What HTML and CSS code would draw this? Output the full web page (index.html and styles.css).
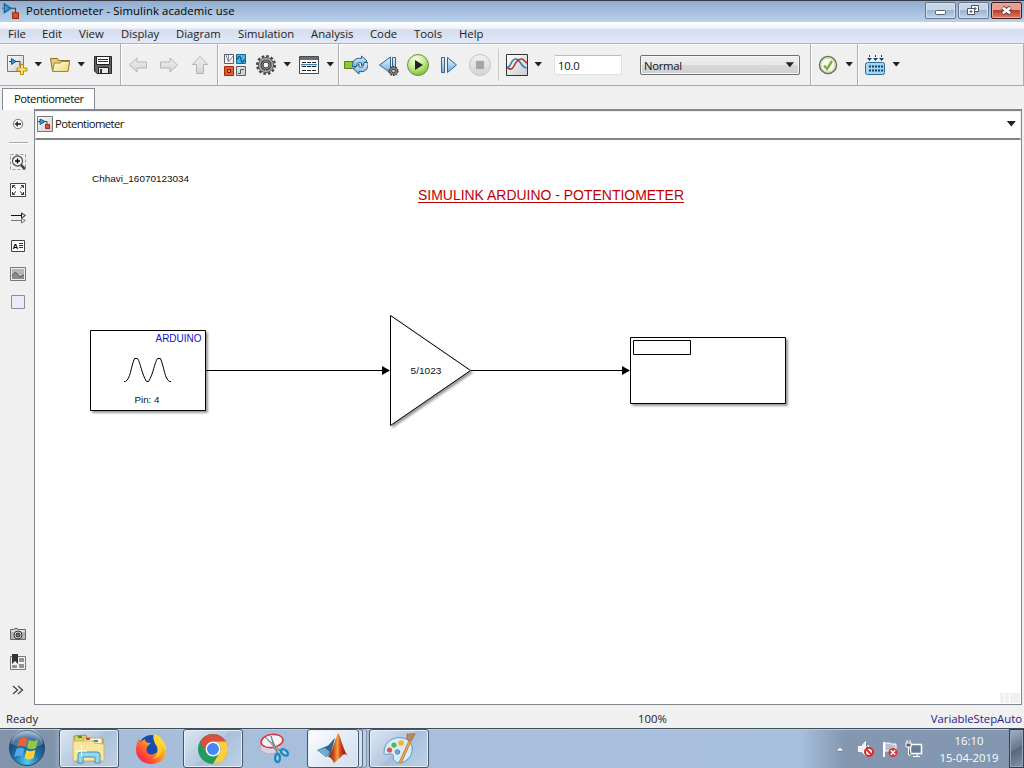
FILE: index.html
```html
<!DOCTYPE html>
<html lang="en">
<head>
<meta charset="utf-8">
<title>Potentiometer - Simulink academic use</title>
<link rel="stylesheet" href="styles.css">
</head>
<body>
<svg width="0" height="0" class="defs">
  <defs>
    <linearGradient id="blue" x1="0" y1="0" x2="0" y2="1"><stop offset="0" stop-color="#e2f3fc"/><stop offset="1" stop-color="#72aedb"/></linearGradient>
    <linearGradient id="tile" x1="0" y1="0" x2="1" y2="1"><stop offset="0" stop-color="#fff"/><stop offset="1" stop-color="#c9ccd0"/></linearGradient>
    <linearGradient id="yellow" x1="0" y1="0" x2="1" y2="1"><stop offset="0" stop-color="#fffff0"/><stop offset="1" stop-color="#ecd36c"/></linearGradient>
    <radialGradient id="green" cx=".4" cy=".25" r=".8"><stop offset="0" stop-color="#fafff0"/><stop offset=".5" stop-color="#c5ec8c"/><stop offset="1" stop-color="#74b72c"/></radialGradient>
    <linearGradient id="gray" x1="0" y1="0" x2="0" y2="1"><stop offset="0" stop-color="#f2f2f2"/><stop offset="1" stop-color="#d2d2d2"/></linearGradient>
    <linearGradient id="flame" x1="0" y1="0" x2="1" y2="0"><stop offset="0" stop-color="#5d1b12"/><stop offset=".3" stop-color="#b8401a"/><stop offset=".5" stop-color="#f6a03c"/><stop offset=".62" stop-color="#d9461c"/><stop offset=".78" stop-color="#9f2414"/><stop offset="1" stop-color="#e04a20"/></linearGradient>
    <linearGradient id="fox" x1="1" y1="0" x2="0" y2="1"><stop offset="0" stop-color="#fff04c"/><stop offset=".4" stop-color="#ffa41c"/><stop offset=".75" stop-color="#ff3d3d"/><stop offset="1" stop-color="#e5187a"/></linearGradient>
    <radialGradient id="orb" cx=".5" cy=".9" r=".9"><stop offset="0" stop-color="#45d5f4"/><stop offset=".4" stop-color="#1d71a8"/><stop offset=".75" stop-color="#1c4c7c"/><stop offset="1" stop-color="#9fc4dc"/></radialGradient>
    <symbol id="caret" viewBox="0 0 8 5"><path d="M.5 0h7.500L4.300 4.500z" fill="#222"/></symbol>
    <symbol id="model" viewBox="0 0 16 16"><path d="M1 5.500H0M7 5.500h5v4" fill="none" stroke="#35424e"/><path d="M2 1.500v8l6-4z" fill="#2a9fd8" stroke="#145a85"/><path d="M9.500 9.500h5v5h-5z" fill="#e65224" stroke="#962c10"/></symbol>
    <symbol id="modelTile" viewBox="0 0 16 16"><path d="M.5.5h15v15H.5z" fill="url(#tile)" stroke="#777"/><path d="M1 5.500h9v4" fill="none" stroke="#35424e"/><path d="M3 3v5.500l5-3z" fill="#2a9fd8" stroke="#145a85"/><path d="M8.500 8.500h4v4h-4z" fill="#e65224" stroke="#962c10"/></symbol>
    <filter id="shadow" x="-10%" y="-10%" width="125%" height="125%"><feDropShadow dx="2" dy="2" stdDeviation="1.300" flood-color="#000" flood-opacity=".4"/></filter>
  </defs>
</svg>
<div class="window">
  <header class="titlebar">
    <svg class="app-icon" width="18" height="18"><use href="#model"/></svg>
    <span class="title">Potentiometer - Simulink academic use</span>
    <div class="controls">
      <span class="control"><svg width="29" height="15"><rect x="9.500" y="7.500" width="10" height="4" rx="1" fill="#fff" stroke="#555f74"/></svg></span>
      <span class="control"><svg width="29" height="15"><path d="M12.500 2.500h7v6h-7z" fill="#fff" stroke="#4d5668"/><path d="M15 5h2v1h-2z" fill="#8ba" stroke="#4d5668"/><path d="M8.500 5.500h7v6h-7z" fill="#fff" stroke="#4d5668"/><path d="M11 8h2v1h-2z" fill="#8ba" stroke="#4d5668"/></svg></span>
      <span class="control close"><svg width="29" height="15"><path d="m10.500 4.500 8 6m0-6-8 6" stroke="#594149" stroke-width="4.600"/><path d="m10.800 4.700 7.400 5.600m0-5.600-7.400 5.600" stroke="#fff" stroke-width="2.600"/></svg></span>
    </div>
  </header>
  <nav class="menubar">
    <span class="m-file">File</span><span class="m-edit">Edit</span><span class="m-view">View</span><span class="m-display">Display</span><span class="m-diagram">Diagram</span><span class="m-sim">Simulation</span><span class="m-analysis">Analysis</span><span class="m-code">Code</span><span class="m-tools">Tools</span><span class="m-help">Help</span>
  </nav>
  <div class="toolbar">
    <div class="group file-group">
      <svg class="icon" viewBox="0 0 24 24"><path d="M2.500 2.500h16v16h-16z" fill="url(#tile)" stroke="#777"/><path d="M4 8.500h11v5" fill="none" stroke="#35424e"/><path d="M6.500 5.500v6l4.500-3z" fill="#2a9fd8" stroke="#145a85"/><path d="M15.500 11.500h3v3.500H22v3h-3.500V21.500h-3v-3.500H12v-3h3.500z" fill="#ffe46b" stroke="#b08a20"/></svg>
      <svg class="caret"><use href="#caret"/></svg>
      <svg class="icon" viewBox="0 0 24 24"><path d="M4.500 18 2.500 5.500h7l1 2h11L20 18z" fill="#e3cb78" stroke="#8b7225"/><path d="M4.500 18.500 6.500 10h6l1-1.500h8L20 18.500z" fill="url(#yellow)" stroke="#a08534"/></svg>
      <svg class="caret"><use href="#caret"/></svg>
      <svg class="icon" viewBox="0 0 24 24"><path d="M3.500 3.500h17v17H6l-2.500-2.500z" fill="#60656a" stroke="#26292c"/><path d="M5.500 3.500h13v8h-13z" fill="#fff" stroke="#222"/><path d="M7 6.500h10M7 8.500h10" stroke="#333"/><path d="M7.500 14.500h10v6h-10z" fill="#e7e9eb" stroke="#222"/><path d="M9 16h2v4H9z" fill="#333"/></svg>
    </div>
    <div class="group nav-group">
      <svg class="icon" viewBox="0 0 24 24"><path d="m3.500 12 7.500-7v4h9.500v6H11v4z" fill="url(#gray)" stroke="#b4b4b4"/></svg>
      <svg class="icon" viewBox="0 0 24 24"><path d="M20.500 12 13 5v4H3.500v6H13v4z" fill="url(#gray)" stroke="#b4b4b4"/></svg>
      <svg class="icon" viewBox="0 0 24 24"><path d="m12 3.500 7.500 8h-4v9h-7v-9h-4z" fill="url(#gray)" stroke="#b4b4b4"/></svg>
    </div>
    <div class="group model-group">
      <svg class="icon" viewBox="0 0 24 24"><path d="M1.500 1.500h9v9h-9zM13.500 13.500h9v9h-9z" fill="url(#tile)" stroke="#5a5f65"/><path d="M3 2l2 6M5.500 2v7l4.500-6" fill="none" stroke="#8a8f95"/><path d="M13.500 1.500h9v9h-9z" fill="#46b5e8" stroke="#17668f"/><path d="M14.500 6.500c1-4 3-4 3.500 0s2.500 3 3.500 0" fill="none" stroke="#064d7a" stroke-width="1.200"/><path d="M1.500 13.500h9v9h-9z" fill="#e65a2c" stroke="#9f2b0e"/><path d="M4.500 16.500h3v3h-3z" fill="#f28b64" stroke="#711b05"/><path d="M15 20.500h2.500v-4H21" fill="none" stroke="#555"/></svg>
      <svg class="icon gear" viewBox="0 0 24 24"><circle cx="12" cy="12" r="8.800" fill="none" stroke="#444" stroke-width="2.400" stroke-dasharray="2.600 2"/><circle cx="12" cy="12" r="7.600" fill="#a8a8a8" stroke="#5a5a5a"/><circle cx="12" cy="12" r="5" fill="#8c8c8c" stroke="#444" stroke-width="1.200"/><circle cx="12" cy="12" r="3" fill="#f4f4f4" stroke="#333"/></svg>
      <svg class="caret"><use href="#caret"/></svg>
      <svg class="icon" viewBox="0 0 24 24"><path d="M2.500 3.500h19v17h-19z" fill="#fff" stroke="#454b52"/><path d="M3 4h18v3H3z" fill="#667078"/><path d="M4 11h16v3H4z" fill="#bde0f5"/><path d="M5 9.500h4m1 0h4m1 0h4M5 13.500h4m1 0h4m1 0h4M5 17.500h4m1 0h4m1 0h4" stroke="#222"/><path d="M4 11.500h16" stroke="#3a85b8"/></svg>
      <svg class="caret"><use href="#caret"/></svg>
    </div>
    <div class="group sim-group">
      <svg class="icon" viewBox="0 0 24 24"><path d="M.5 8.500h11v7H.5z" fill="#90c83c" stroke="#587e20"/><path d="M8.500 13.500C8 7 12 4.500 17.500 5.500V3l5.500 5-5.500 5v-3c-4-1-5 1-5 3.500z" fill="url(#blue)" stroke="#235b8b"/><path d="M24 9.500c.5 7-3.500 10-9 9V21l-5.500-5 5.500-5v3c4 1 5-1 5-4.500z" fill="url(#blue)" stroke="#235b8b"/></svg>
      <svg class="icon step-back" viewBox="0 0 24 24"><path d="M13.500 4v16L2.500 12z" fill="url(#blue)" stroke="#35658f"/><path d="M15.500 4.500h3v15h-3z" fill="url(#blue)" stroke="#35658f"/><circle cx="16.500" cy="18" r="4.300" fill="#888" stroke="#333" stroke-width="1.400" stroke-dasharray="1.700 1"/><circle cx="16.500" cy="18" r="1.800" fill="#ddd" stroke="#333"/></svg>
      <svg class="icon run" viewBox="0 0 24 24"><circle cx="12" cy="12" r="10.500" fill="url(#green)" stroke="#6c8c4a"/><path d="M9 7v10l8-5z" fill="#222"/></svg>
      <svg class="icon step" viewBox="0 0 24 24"><path d="M4.500 4.500h3v15h-3zM10.500 4.500v15l9-7.500z" fill="url(#blue)" stroke="#35658f"/></svg>
      <svg class="icon stop" viewBox="0 0 24 24"><circle cx="12" cy="12" r="10.500" fill="url(#gray)" stroke="#c5c5c5"/><path d="M8 8h8v8H8z" fill="#a5a5a5"/></svg>
      <span class="thin-rule"></span>
      <svg class="icon" viewBox="0 0 24 24"><path d="M1.500 1.500h21v21h-21z" fill="url(#tile)" stroke="#333"/><path d="M2 15c4-1 4-9 8.500-9C16 6 15 14 21.500 15" fill="none" stroke="#347fb9" stroke-width="1.600"/><path d="M2 14c2 3 5 3 7-1 2-5 4-7 7.500-7C19 6 20 9 22 10" fill="none" stroke="#b9302c" stroke-width="1.600"/></svg>
      <svg class="caret"><use href="#caret"/></svg>
      <span class="stop-time">10.0</span>
      <span class="mode"><span>Normal</span><svg class="select-arrow"><use href="#caret"/></svg></span>
    </div>
    <div class="group check-group">
      <svg class="icon" viewBox="0 0 24 24"><circle cx="12" cy="12" r="8.500" fill="#f8fbf2" stroke="#667260" stroke-width="1.500"/><circle cx="12" cy="12" r="7" fill="none" stroke="#b9d794"/><path d="m8 12.500 3 3.500 5-8" fill="none" stroke="#7eaf35" stroke-width="2.400"/></svg>
      <svg class="caret"><use href="#caret"/></svg>
    </div>
    <div class="group deploy-group">
      <svg class="icon" viewBox="0 0 24 24"><path d="M6.500 2v4m6-4v4m6-4v4" stroke="#17446e" stroke-dasharray="2 1"/><path d="M4 5h5L6.500 8zM10 5h5l-2.500 3zM16 5h5l-2.500 3z" fill="#17446e"/><rect x="2.500" y="9.500" width="19" height="12" rx="2" fill="#a5d5f5" stroke="#2d6b9c"/><path d="M6 13.500h14M6 17.500h14" stroke="#123f69" stroke-width="2" stroke-dasharray="2 1"/></svg>
      <svg class="caret"><use href="#caret"/></svg>
    </div>
  </div>
  <div class="tabs"><span class="tab">Potentiometer</span></div>
  <main class="workspace">
    <aside class="palette">
      <svg class="tool" viewBox="0 0 28 28"><circle cx="14" cy="14" r="4.700" fill="#f7f7f7" stroke="#777"/><path d="M17 14h-4" stroke="#333" stroke-width="1.800"/><path d="M14 11v6l-3.500-3z" fill="#333"/></svg>
      <span class="palette-rule"></span>
      <svg class="tool" viewBox="0 0 28 28"><path d="M6.500 6.500h15v15h-15z" fill="none" stroke="#999" stroke-dasharray="3 2"/><circle cx="13.500" cy="13" r="5" fill="#f8f8f8" stroke="#555" stroke-width="1.300"/><path d="M11 13h5m-2.500-2.500v5" stroke="#000" stroke-width="1.500"/><path d="m17 17 4 4" stroke="#444" stroke-width="2.500"/></svg>
      <svg class="tool" viewBox="0 0 28 28"><path d="M6.500 7.500h15v13h-15z" fill="#fff" stroke="#444"/><path d="M8.500 12V9.500H11M9 10l3 2.500M19.500 12V9.500H17M19 10l-3 2.500M8.500 16v2.500H11M9 18l3-2.500M19.500 16v2.500H17M19 18l-3-2.500" fill="none" stroke="#333"/></svg>
      <svg class="tool" viewBox="0 0 28 28"><path d="M7 11.500h11" stroke="#111"/><path d="M17.500 9v5l4-2.500z" fill="#eee" stroke="#222"/><path d="M7 16.500h11" stroke="#777"/><path d="M17.500 14v5l4-2.500z" fill="#eee" stroke="#777"/></svg>
      <svg class="tool" viewBox="0 0 28 28"><path d="M7.500 8.500h13v11h-13z" fill="#fff" stroke="#444"/><text x="8.500" y="17" class="annotation-letter">A</text><path d="M15 11.500h4M15 13.500h4M15 15.500h4" stroke="#333"/></svg>
      <svg class="tool" viewBox="0 0 28 28"><path d="M6.500 7.500h15v13h-15z" fill="#eee" stroke="#777"/><path d="M8 9h12v10H8z" fill="#b5b5b5"/><path d="M8 16c3-5 4-4 6-1s3 1 6 0v4H8z" fill="#8a8a8a"/><path d="M8 16c3-5 4-4 6-1s3 1 6 0" fill="none" stroke="#555"/></svg>
      <svg class="tool" viewBox="0 0 28 28"><path d="M7.500 7.500h13v13h-13z" fill="#eaeaf8" stroke="#8e8e98"/></svg>
      <div class="palette-bottom">
        <svg class="tool" viewBox="0 0 28 28"><path d="M6.500 9.500h3l1-1h3l1 1h7v10h-15z" fill="#b5b5b5" stroke="#666"/><path d="M7 10h14v2H7z" fill="#ddd"/><circle cx="14" cy="15" r="4" fill="#ddd" stroke="#333"/><circle cx="14" cy="15" r="2" fill="#777" stroke="#222"/></svg>
        <svg class="tool" viewBox="0 0 28 28"><path d="M6.500 8.500h15v13h-15z" fill="#f5f5f5" stroke="#777"/><path d="M8 6h6v10l-3-3-3 3z" fill="#333"/><path d="M15 10h5v4h-5zM15 16h5v4h-5zM8 17h5v3H8z" fill="#929292"/></svg>
        <svg class="tool" viewBox="0 0 28 28"><path d="m9 10 4.500 4L9 18m5-8 4.500 4L14 18" fill="none" stroke="#444" stroke-width="1.300"/></svg>
      </div>
    </aside>
    <section class="editor">
      <div class="breadcrumb"><svg width="16" height="16"><use href="#modelTile"/></svg><span>Potentiometer</span><svg class="crumb-arrow"><use href="#caret"/></svg></div>
      <svg class="canvas" viewBox="35 140 986 564" width="986" height="564">
        <text class="note" x="92" y="182" textLength="97" lengthAdjust="spacingAndGlyphs">Chhavi_16070123034</text>
        <text class="heading" x="418" y="200" textLength="266" lengthAdjust="spacingAndGlyphs">SIMULINK ARDUINO - POTENTIOMETER</text>
        <path d="M418 202.500h266" stroke="#c00000"/>
        <path d="M90.500 330.500h115v80h-115z" class="block"/>
        <text class="arduino" x="155.500" y="342" textLength="46" lengthAdjust="spacingAndGlyphs">ARDUINO</text>
        <path d="M124 381.500h1.500c5-3 5-13 9-23h3c3 4 4 15 9 23h2c5-8 6-19 9-23h3c4 10 4 20 9 23h1.500" class="wave"/>
        <text class="note" x="134.500" y="403" textLength="25" lengthAdjust="spacingAndGlyphs">Pin: 4</text>
        <path d="M390.500 315.500v110l80-55z" class="block"/>
        <text class="note" x="410.500" y="374" textLength="31" lengthAdjust="spacingAndGlyphs">5/1023</text>
        <path d="M630.500 337.500h155v66h-155z" class="block"/>
        <path d="M633.500 340.500h57v14h-57z" class="readout"/>
        <path d="M206 370.500h177m88 0h152" stroke="#000"/>
        <path d="m382 366 8 4.500-8 4.500zM622 366l8 4.500-8 4.500z"/>
        <path d="M1000 693h4v10h-4zM1005 693h4v10h-4zM1010 693h10v10h-10z" fill="#f0f0f0"/>
      </svg>
    </section>
  </main>
  <footer class="status"><span class="ready">Ready</span><span class="zoom">100%</span><span class="solver">VariableStepAuto</span></footer>
  <div class="taskbar">
    <div class="start"><svg width="40" height="40" viewBox="0 0 40 40"><circle cx="20" cy="19" r="17.500" fill="url(#orb)" stroke="#274865"/><path d="M4 15a16 16 0 0 1 32 0c-10 5-20 3-32 0z" fill="#fff" opacity=".23"/><path d="M12.500 10c3-2 5-1.500 8 0L18 18c-3-2-5-1-8 0z" fill="#ef6130"/><path d="M22 11c3 2 6 1 9-.5L29 19c-3 1.500-6 2-9 0z" fill="#91c840"/><path d="M9.500 20c3-2 5-1 8 0L15 28c-3-2-5-1-8 0z" fill="#55a9e8"/><path d="M19.500 21c3 2 6 1 9 0l-2 8c-3 2-6 2-9 0z" fill="#ffd13d"/></svg></div>
    <div class="slot"><span class="task active"><svg width="36" height="34" viewBox="0 0 36 34"><path d="M3 4l12-1 1 3 16 1v22H3z" fill="#e4ca6b" stroke="#a38c3f"/><path d="M13 6h18v6H13z" fill="#fff8d0" stroke="#c3aa57"/><path d="M7 4h4v2H7z" fill="#24a728"/><path d="M15 6h4v2h-4z" fill="#d5422b"/><path d="M22 8h5v2h-5z" fill="#2e8edb"/><path d="M2 9h21v2l10 1v17H2z" fill="#f7e6a0" stroke="#d0b85f"/><path d="M7 31v-8q0-3 3-3h16q3 0 3 3v8h-5v-6H12v6z" fill="#91d8f1" stroke="#488fac"/><path d="M5 19h11M10.500 13v11" stroke="#fff"/></svg></span></div>
    <div class="slot"><span class="task"><svg width="34" height="34" viewBox="0 0 34 34"><circle cx="17.500" cy="16" r="13" fill="#174bb0"/><path d="M20 2c5 1 12 8 12 16 0 9-7 14-15 14S2 26 2 18c0-5 1-9 4-12v4l5-3c0 3 2 4 6 4l-4 4c-2 5 2 9 7 7 6-2 5-8 1-10 0-4-3-6-1-10z" fill="url(#fox)"/><path d="M21 2c5 2 11 8 11 16l-4-4c1 8-4 13-10 13 5-2 7-7 4-14-3-5-3-7-1-11z" fill="#ffe33c" opacity=".65"/></svg></span></div>
    <div class="slot"><span class="task active"><svg width="34" height="34" viewBox="0 0 34 34"><circle cx="17" cy="17" r="15" fill="#229b5d"/><path d="M4 9.500A15 15 0 0 1 30 9.500H17a7.500 7.500 0 0 0-6.500 11.250z" fill="#d85040"/><path d="M30 9.500A15 15 0 0 1 17 32l6.500-11.250A7.500 7.500 0 0 0 17 9.500z" fill="#ffcd40"/><circle cx="17" cy="17" r="7.500" fill="#fff"/><circle cx="17" cy="17" r="6" fill="#4688f4"/></svg></span></div>
    <div class="slot"><span class="task"><svg width="34" height="34" viewBox="0 0 34 34"><ellipse cx="12" cy="15" rx="10" ry="7" fill="#d3d5e4" stroke="#d3a3b4"/><ellipse cx="14" cy="9" rx="11" ry="6.500" fill="#f6f6fa" stroke="#d83b3f" stroke-width="1.600" transform="rotate(-8 14 9)"/><path d="m7 5 16 14-5-2zM13 4l7 18-4-6z" fill="#e5e9ec" stroke="#78828c"/><ellipse cx="26.500" cy="20.500" rx="4" ry="2.500" fill="#b7d5ea" stroke="#2187c4" stroke-width="2.400" transform="rotate(40 26.500 20.500)"/><ellipse cx="19.500" cy="26" rx="2.300" ry="4" fill="#b7d5ea" stroke="#2187c4" stroke-width="2.400"/></svg></span></div>
    <div class="slot"><span class="task active bright"><svg width="36" height="34" viewBox="0 0 36 34"><path d="m2 18 10-4c3-1 5-6 8-8l-4 15-5 4z" fill="#2f6793"/><path d="m2 18 8-2 5 4-4 5z" fill="#6caed0"/><path d="M11 25c5 0 6-9 12-24 2 1 5 18 11 24-4-4-6-3-8 0-2 1-3 3-7 6-2-4-4-7-8-6z" fill="url(#flame)"/></svg></span><span class="stack"></span><span class="stack second"></span></div>
    <div class="slot"><span class="task active"><svg width="36" height="34" viewBox="0 0 36 34"><path d="M3 20C3 9 14 4 22 6c10 2 12 14 5 21-5 5-12 5-14 1-2-3 1-4-2-6-3-1-8 3-8-2z" fill="#d5edf9" stroke="#519dc4"/><circle cx="8.500" cy="18" r="2.600" fill="#e25448"/><circle cx="13" cy="13" r="2.600" fill="#5ab64c"/><circle cx="20" cy="11" r="2.800" fill="#f3b431"/><circle cx="16.500" cy="20" r="2.200" fill="#73a9d5" stroke="#458bb7"/><path d="M29 9 19 31" stroke="#c9741e" stroke-width="3"/><path d="M29 9 19 31" stroke="#f4a849" stroke-width="1.500"/><path d="M26 2c3 1 5-1 8 0l-4 7-4-2z" fill="#b98c5c" stroke="#9c7249"/></svg></span></div>
    <div class="tray">
      <svg class="up" width="10" height="6"><path d="M1 5h8L5 1z" fill="#fff" stroke="#52637b" stroke-width=".5"/></svg>
      <svg class="tray-icon" width="18" height="18" viewBox="0 0 18 18"><path d="M1.500 6.500h3l4-5v14l-4-4h-3z" fill="#eee" stroke="#fff"/><path d="M11 5q2 3 0 5" fill="none" stroke="#fff"/><circle cx="12" cy="12" r="4" fill="#fff" stroke="#d52d26" stroke-width="2"/><path d="m9 9 6 6" stroke="#d52d26" stroke-width="2"/></svg>
      <svg class="tray-icon" width="18" height="18" viewBox="0 0 18 18"><path d="M3 17V2" stroke="#fff" stroke-width="2"/><path d="M4 3h5l1 1h5v8H9l-1-1H4z" fill="#b7c0cc" stroke="#fff"/><circle cx="12" cy="12.500" r="4.500" fill="#d63732"/><path d="m9.800 10.300 4.400 4.400m0-4.400-4.400 4.400" stroke="#fff" stroke-width="1.500"/></svg>
      <svg class="tray-icon" width="18" height="18" viewBox="0 0 18 18"><path d="M5.500 4.500h11v9h-11z" fill="#687b93" stroke="#fff" stroke-width="1.500"/><path d="M8 16.500h7M12 14v2" stroke="#fff"/><path d="M1 3h5v4H1zM2 0v3m3-3v3M3.500 7v8H6" fill="#516178" stroke="#fff"/></svg>
      <div class="clock"><span>16:10</span><span>15-04-2019</span></div>
      <span class="show-desktop"></span>
    </div>
  </div>
</div>
</body>
</html>
```
FILE: styles.css
```css
* { box-sizing: border-box; }
body { margin: 0; overflow: hidden; background: #f0f0f0; color: #111; font: 11.3px/16px "Open Sans", "Noto Sans", sans-serif; }
svg { display: block; flex: none; }
.defs { position: absolute; }
.window { width: 1024px; height: 768px; display: flex; flex-direction: column; }
.titlebar { height: 22px; flex: none; display: flex; padding-left: 2px; border-top: 1px solid #343941; background: linear-gradient(#91acce, #b9d1ea); color: #000; }
.app-icon { margin-top: 1px; }
.title { margin: 2px 0 0 6px; letter-spacing: .09px; white-space: nowrap; }
.controls { margin-left: auto; display: flex; gap: 2px; padding: 1px 2px 0 0; }
.control { width: 31px; height: 17px; border: 1px solid #65758e; border-radius: 2px; background: linear-gradient(#c6d6e8 48%, #9db5d0 50%, #bbd1e8); box-shadow: inset 0 0 0 1px #d5e2f0; }
.close { border-color: #451723; background: linear-gradient(#e2a191 45%, #bf3d26 50%, #d98064); box-shadow: inset 0 0 0 1px #e6aca0; }
.menubar { height: 21px; flex: none; display: flex; padding: 4px 0 0 8px; color: #222; background: linear-gradient(#fff 0, #f0f4fb 6px, #d5dcec 8px, #e1e8f8 100%); white-space: nowrap; }
.m-file { width: 34px; }
.m-edit { width: 37px; }
.m-view { width: 42px; }
.m-display { width: 55px; }
.m-diagram { width: 62px; }
.m-sim { width: 73px; }
.m-analysis { width: 59px; }
.m-code { width: 44px; }
.m-tools { width: 45px; }
.toolbar { height: 43px; flex: none; display: flex; border-top: 1px solid #adb3bf; border-bottom: 1px solid #a9a9a9; background: #f0f0f0; box-shadow: inset 0 1px #fff; }
.group { display: flex; align-items: center; padding-left: 5px; border-right: 1px solid #aeaeae; box-shadow: 1px 0 #fff; }
.file-group { width: 121px; }
.nav-group { width: 97px; gap: 7px; }
.model-group { width: 121px; }
.sim-group { width: 472px; }
.check-group { width: 47px; }
.deploy-group { flex: 1; }
.icon { width: 24px; height: 24px; }
.caret { width: 8px; height: 5px; margin: 0 6px 0 5px; }
.gear { margin-left: 7px; }
.step-back { margin-left: 9px; }
.run { margin-left: 5px; }
.step, .stop { margin-left: 7px; }
.thin-rule { width: 1px; height: 32px; margin: 0 6px; background: #ccc; }
.stop-time { width: 68px; height: 20px; margin-left: 6px; padding: 2px 3px; border: 1px solid #dce1e6; border-top-color: #b8bdc4; border-radius: 2px; background: #fff; letter-spacing: -.2px; }
.mode { width: 160px; height: 20px; margin-left: 18px; padding: 2px 3px; border: 1px solid #707070; border-radius: 2px; display: flex; justify-content: space-between; background: linear-gradient(#f0f0f0, #e6e6e6 48%, #d8d8d8 50%, #cfcfcf); box-shadow: inset 0 0 0 1px #f8f8f8; letter-spacing: -.3px; }
.select-arrow { width: 9px; height: 6px; margin: 4px 2px; }
.tabs { height: 23px; flex: none; display: flex; padding: 2px 0 0 2px; }
.tab { width: 93px; height: 22px; padding: 2px 0 0 11px; border: 1px solid #858a94; border-bottom: 0; background: #fff; letter-spacing: -.52px; }
.workspace { height: 596px; flex: none; display: flex; padding-right: 2px; }
.palette { width: 34px; display: flex; flex-direction: column; align-items: center; padding: 1px 0 1px 2px; }
.tool { width: 28px; height: 28px; }
.palette-rule { width: 19px; height: 2px; margin: 4px 0; border-top: 1px solid #aaa; border-bottom: 1px solid #fff; }
.annotation-letter { font: bold 8px "Liberation Sans", Arial, sans-serif; }
.palette-bottom { margin-top: auto; }
.editor { width: 988px; border: 1px solid #82868f; border-top-width: 2px; background: #fff; }
.breadcrumb { height: 29px; display: flex; align-items: center; padding: 0 4px 2px 1px; border: 1px solid #eee; border-bottom: 2px solid #82868f; letter-spacing: -.58px; }
.breadcrumb span { margin-left: 2px; }
.crumb-arrow { width: 10px; height: 6px; margin: 0 0 1px auto; }
.note { font: 9.8px "Liberation Sans", Arial, sans-serif; fill: #111; }
.heading { font: 14.4px "Liberation Sans", Arial, sans-serif; fill: #c00000; }
.arduino { font: 10.2px "Liberation Sans", Arial, sans-serif; fill: #1010d0; }
.block { fill: #fff; stroke: #000; filter: url(#shadow); }
.readout { fill: #fff; stroke: #000; }
.wave { fill: none; stroke: #000; }
.status { height: 23px; flex: none; display: flex; padding: 6px 2px 0 6px; color: #222; white-space: nowrap; }
.ready { width: 632px; flex: none; }
.solver { margin-left: auto; color: #22228e; }
.taskbar { height: 40px; flex: none; display: flex; border-top: 1px solid #3e4d5c; background: linear-gradient(90deg, #8194ac 0, #8194ac 54px, #a7bedb 66px, #a7c0de 800px, #8397b0 845px); box-shadow: inset 0 1px #bdcbdd; }
.start { width: 59px; padding-left: 7px; }
.slot { width: 62px; display: flex; }
.task { width: 60px; height: 39px; display: flex; align-items: center; justify-content: center; }
.active { border: 1px solid #465568; border-radius: 3px; background: linear-gradient(135deg, #dce6f2, #b6c9e1 48%, #a9c0dc 50%, #bed0e5); box-shadow: inset 0 0 0 1px #e8eff8; }
.bright { width: 52px; background: linear-gradient(135deg, #fff, #e3ecf6 50%, #d0deee); }
.stack { width: 4px; height: 39px; border: 1px solid #59697e; border-left: 0; border-radius: 0 3px 3px 0; background: #d5e1ef; }
.second { opacity: .45; }
.tray { margin-left: auto; display: flex; align-items: center; color: #fff; }
.up { margin-right: 12px; }
.tray-icon { margin-right: 6px; }
.clock { width: 80px; display: flex; flex-direction: column; align-items: center; line-height: 17px; }
.show-desktop { width: 15px; height: 39px; border: 1px solid #33414f; background: linear-gradient(150deg, #a6b3c3, #66778c 50%, #57677b 52%, #8493a6); box-shadow: inset 0 0 0 1px #98a6b8; }
```
